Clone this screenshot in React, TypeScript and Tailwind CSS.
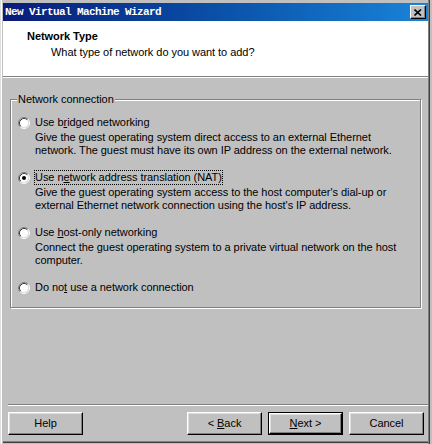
import React from "react";

function Radio({ checked }: { checked?: boolean }) {
  return (
    <svg width="12" height="12" viewBox="0 0 12 12" className="shrink-0">
      <circle cx="6" cy="6" r="4.5" fill="#fff" />
      <path d="M2.11 9.89A5.5 5.5 0 0 1 9.89 2.11" fill="none" stroke="#808080" />
      <path d="M9.89 2.11A5.5 5.5 0 0 1 2.11 9.89" fill="none" stroke="#fff" />
      <path d="M2.82 9.18A4.5 4.5 0 0 1 9.18 2.82" fill="none" stroke="#404040" />
      <path d="M9.18 2.82A4.5 4.5 0 0 1 2.82 9.18" fill="none" stroke="#dfdfdf" />
      {checked && <circle cx="6" cy="6" r="2" fill="#000" />}
    </svg>
  );
}

function Option({
  label,
  lines,
  checked,
  focused,
}: {
  label: React.ReactNode;
  lines?: string[];
  checked?: boolean;
  focused?: boolean;
}) {
  return (
    <div>
      <div className="flex items-center gap-[5px] h-[13px]">
        <Radio checked={checked} />
        <span className={focused ? "[outline:1px_dotted_#000]" : ""}>{label}</span>
      </div>
      {lines && (
        <div className="mt-[2px] pl-[17px] whitespace-nowrap">
          {lines.map((l) => (
            <div key={l}>{l}</div>
          ))}
        </div>
      )}
    </div>
  );
}

function Btn({ children, def }: { children: React.ReactNode; def?: boolean }) {
  return (
    <div className={`w-[75px] h-[23px] ${def ? "border border-black" : ""}`}>
      <div className="w-full h-full flex items-center justify-center border border-t-white border-l-white border-r-black border-b-black shadow-[inset_-1px_-1px_0_#808080,inset_1px_1px_0_#dfdfdf]">
        <span className="whitespace-pre">{children}</span>
      </div>
    </div>
  );
}

export default function App() {
  return (
    <div className="w-[432px] h-[444px] bg-[#c0c0c0] flex font-['Liberation_Sans',Arial,sans-serif] text-[11px] leading-[13px] tracking-[-0.05px] text-black">
      {/* left frame */}
      <div className="w-[3px] flex">
        <div className="w-px bg-[#dfdfdf]" />
        <div className="w-px bg-white" />
        <div className="w-px" />
      </div>

      <div className="flex-1 flex flex-col pt-[3px]">
        {/* title bar */}
        <div className="h-[18px] flex items-center bg-gradient-to-r from-[#0a1a78] to-[#1a84d8] pl-[2px] pr-[2px]">
          <span className="flex-1 font-['Liberation_Mono',monospace] font-bold text-[11px] tracking-[-0.6px] text-white">
            New Virtual Machine Wizard
          </span>
          <div className="w-[16px] h-[14px] bg-[#c0c0c0] border border-t-white border-l-white border-r-black border-b-black shadow-[inset_-1px_-1px_0_#808080] flex items-center justify-center">
            <svg width="8" height="7" viewBox="0 0 8 7">
              <path d="M0.5 0.5L7 6.5M7 0.5L0.5 6.5" stroke="#000" strokeWidth="1.6" />
            </svg>
          </div>
        </div>

        {/* header */}
        <div className="h-[55px] bg-white pt-[9px]">
          <div className="pl-[24px] font-bold">Network Type</div>
          <div className="pl-[48px] mt-[3px]">What type of network do you want to add?</div>
        </div>
        <div className="h-px bg-[#808080]" />
        <div className="h-px bg-white" />

        {/* group box */}
        <div className="mt-[21px] ml-[7px] mr-[7px] h-[209px] relative border border-[#808080] shadow-[inset_1px_1px_0_#fff,1px_1px_0_#fff] pl-[7px] pt-[16px] flex flex-col gap-[14px]">
          <span className="absolute left-[6px] -top-[7px] bg-[#c0c0c0] px-px">Network connection</span>
          <Option
            label={
              <>
                Use b<u>r</u>idged networking
              </>
            }
            lines={[
              "Give the guest operating system direct access to an external Ethernet",
              "network. The guest must have its own IP address on the external network.",
            ]}
          />
          <Option
            checked
            focused
            label={
              <>
                Use n<u>e</u>twork address translation (NAT)
              </>
            }
            lines={[
              "Give the guest operating system access to the host computer's dial-up or",
              "external Ethernet network connection using the host's IP address.",
            ]}
          />
          <Option
            label={
              <>
                Use <u>h</u>ost-only networking
              </>
            }
            lines={[
              "Connect the guest operating system to a private virtual network on the host",
              "computer.",
            ]}
          />
          <Option
            label={
              <>
                Do no<u>t</u> use a network connection
              </>
            }
          />
        </div>

        <div className="flex-1" />

        {/* footer */}
        <div className="ml-[5px] h-px bg-[#808080]" />
        <div className="ml-[5px] h-px bg-white" />
        <div className="mt-[6px] ml-[5px] mr-[4px] flex gap-[6px]">
          <Btn>Help</Btn>
          <div className="flex-1" />
          <Btn>
            &lt; <u>B</u>ack
          </Btn>
          <Btn def>
            <u>N</u>ext &gt;
          </Btn>
          <Btn>Cancel</Btn>
        </div>
        <div className="h-[6px]" />
        {/* bottom frame */}
        <div className="h-px bg-[#808080]" />
        <div className="h-px bg-[#404040]" />
        <div className="h-px" />
      </div>

      {/* right frame */}
      <div className="w-[4px] flex">
        <div className="w-px bg-[#808080]" />
        <div className="w-px bg-[#404040]" />
        <div className="w-[2px]" />
      </div>
    </div>
  );
}
